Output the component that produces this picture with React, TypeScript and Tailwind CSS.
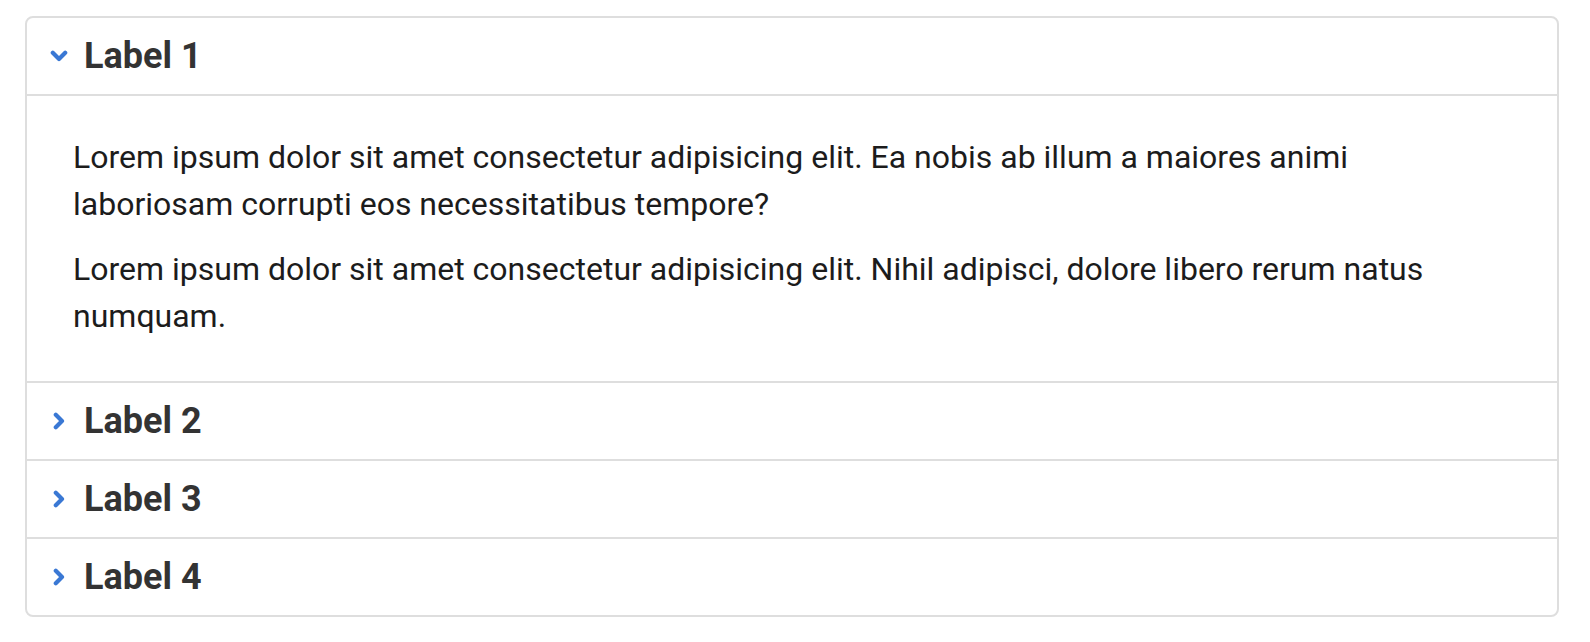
import { useState } from "react";

const ITEMS = [
  {
    label: "Label 1",
    body: [
      "Lorem ipsum dolor sit amet consectetur adipisicing elit. Ea nobis ab illum a maiores animi laboriosam corrupti eos necessitatibus tempore?",
      "Lorem ipsum dolor sit amet consectetur adipisicing elit. Nihil adipisci, dolore libero rerum natus numquam.",
    ],
  },
  { label: "Label 2", body: ["Lorem ipsum dolor sit amet consectetur adipisicing elit."] },
  { label: "Label 3", body: ["Lorem ipsum dolor sit amet consectetur adipisicing elit."] },
  { label: "Label 4", body: ["Lorem ipsum dolor sit amet consectetur adipisicing elit."] },
];

function Chevron({ open }: { open: boolean }) {
  return (
    <svg
      width="18"
      height="18"
      viewBox="0 0 18 18"
      className={open ? "shrink-0" : "shrink-0 -rotate-90"}
    >
      <polyline
        points="2.8,5.8 9,12 15.2,5.8"
        fill="none"
        stroke="#3a78d4"
        strokeWidth="4.2"
        strokeLinecap="round"
        strokeLinejoin="round"
      />
    </svg>
  );
}

export default function App() {
  const [open, setOpen] = useState(0);

  return (
    <div className="min-h-screen bg-white pt-4 pl-[25px] font-[Roboto,sans-serif]">
      <div className="w-[1534px] border-2 border-[#dedede] rounded-lg overflow-hidden">
        {ITEMS.map((item, i) => (
          <div key={item.label} className={i > 0 ? "border-t-2 border-[#dedede]" : ""}>
            <button
              onClick={() => setOpen(open === i ? -1 : i)}
              className="flex items-center gap-4 w-full h-[76px] pl-[23px] text-left"
            >
              <Chevron open={open === i} />
              <span className="text-[36px] font-bold text-[#333333]">{item.label}</span>
            </button>
            {open === i && (
              <div className="border-t-2 border-[#dedede] pt-[38px] pb-[41px] pl-[46px] pr-[94px] text-[32px] leading-[47px] text-[#1c1c1c]">
                {item.body.map((p, j) => (
                  <p key={j} className={j > 0 ? "mt-[18px]" : ""}>
                    {p}
                  </p>
                ))}
              </div>
            )}
          </div>
        ))}
      </div>
    </div>
  );
}
